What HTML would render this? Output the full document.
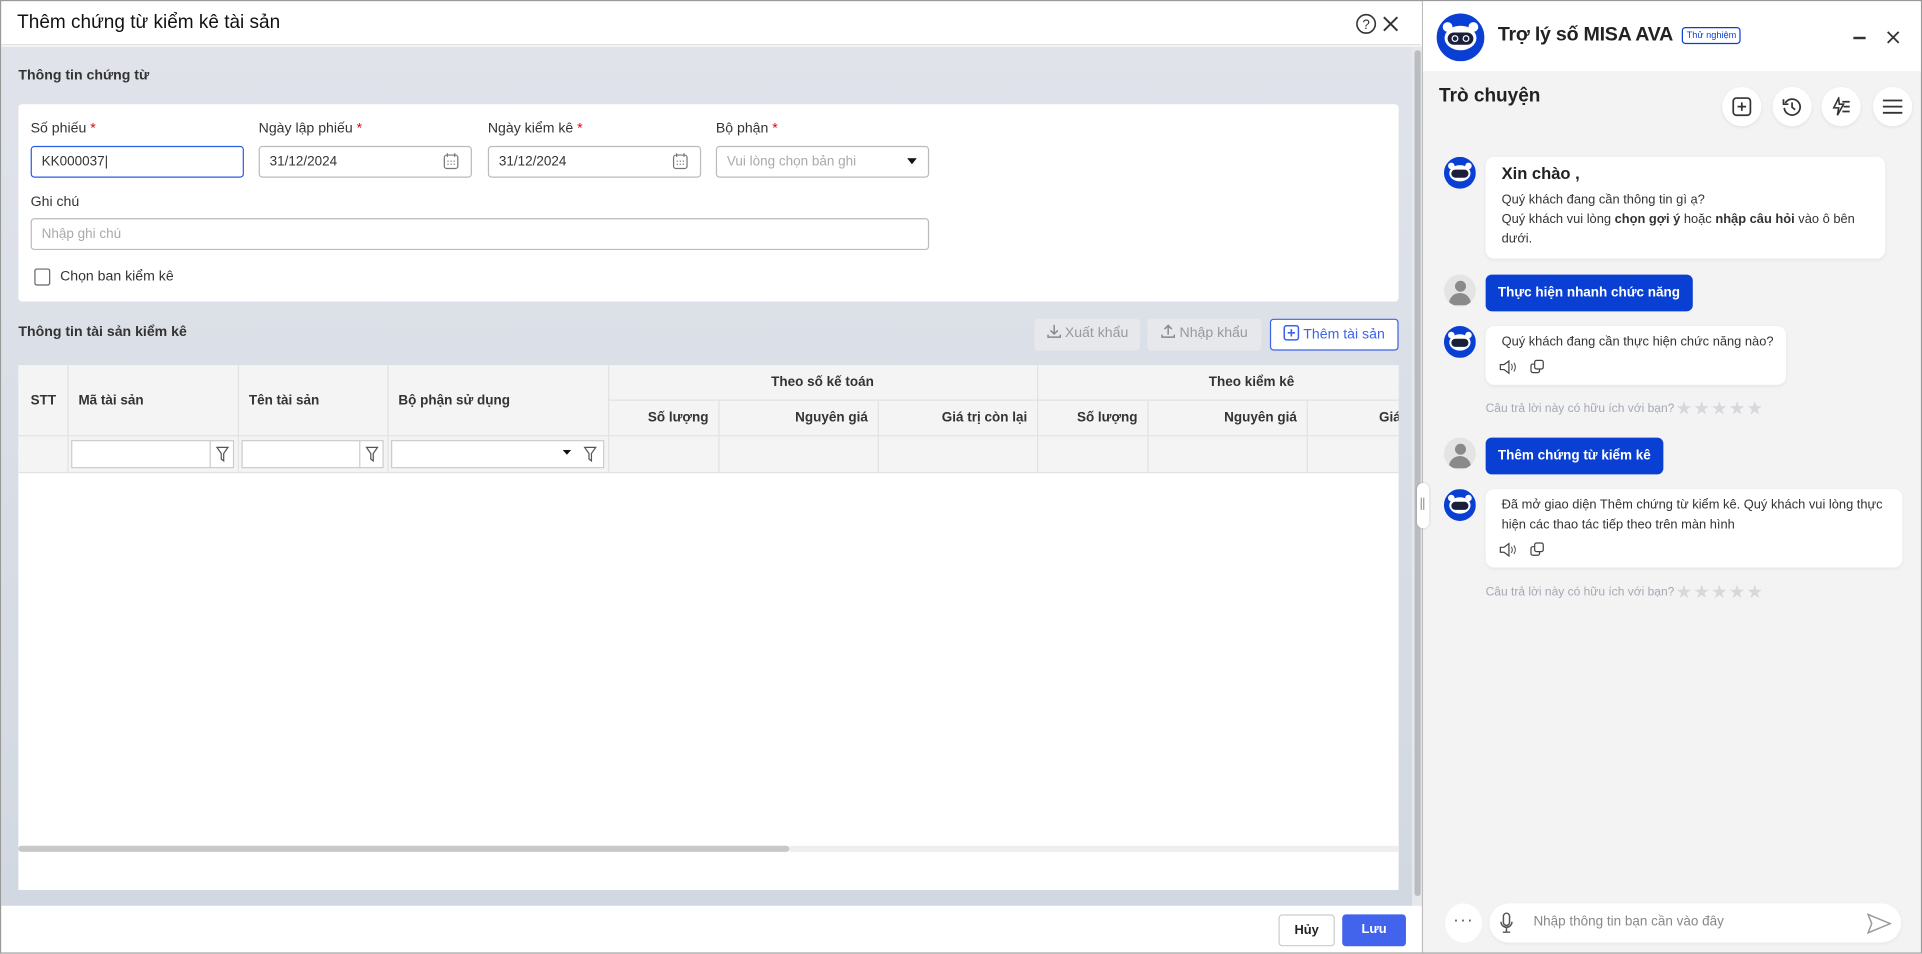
<!DOCTYPE html>
<html><head><meta charset="utf-8"><style>
*{box-sizing:border-box;margin:0;padding:0}
html,body{width:1922px;height:954px;overflow:hidden;background:#fff}
#s{width:1568px;height:778px;transform:scale(1.22577);transform-origin:0 0;position:relative;font-family:"Liberation Sans",Arial,sans-serif;font-size:12px;color:#222;border:1px solid #999;overflow:hidden}
.a{position:absolute}
.lbl{font-size:11.5px;color:#333}
.req{color:#e00}
.inp{position:absolute;height:26px;border:1px solid #bbb;border-radius:3px;background:#fff;font-size:11px;padding:0 8px;line-height:24px;color:#333}
.ph{color:#aaa}
.th{position:absolute;font-weight:bold;font-size:11px;color:#333;white-space:nowrap}
.vl{position:absolute;width:1px;background:#e2e2e2}
.btn{position:absolute;height:26px;border-radius:3px;font-size:11.5px;line-height:24px;text-align:center;white-space:nowrap}
.bub{position:absolute;background:#fff;border-radius:7px;box-shadow:0 1px 3px rgba(0,0,0,.06);font-size:10.5px;color:#333;line-height:16px}
.ub{position:absolute;background:#0a3fd4;color:#fff;border-radius:5px;font-weight:bold;height:30px;line-height:30px;padding:0 10px;white-space:nowrap;font-size:11px}
.uav{position:absolute;width:26px;height:26px;border-radius:50%;background:#e4e4e4;overflow:hidden}
.rate{position:absolute;font-size:9.8px;color:#a3a9b5;white-space:nowrap}
.stars{position:absolute;color:#d6d8dc;font-size:15px;letter-spacing:1px}
.ib{position:absolute;width:32px;height:32px;border-radius:50%;background:#fff;box-shadow:0 1px 3px rgba(0,0,0,.08)}
</style></head><body><div id="s">
<div class="a" style="left:0;top:0;width:1158px;height:36px;background:#fff;border-bottom:1px solid #ddd"></div>
<div class="a" style="left:13px;top:9px;font-size:15.5px;color:#111">Thêm chứng từ kiểm kê tài sản</div>
<svg class="a" style="left:1105px;top:10px" width="17" height="17" viewBox="0 0 17 17"><circle cx="8.5" cy="8.5" r="7.5" fill="none" stroke="#333" stroke-width="1.3"/><text x="8.5" y="12.5" font-size="11" text-anchor="middle" fill="#333" font-family="Liberation Sans">?</text></svg>
<svg class="a" style="left:1127px;top:12px" width="13" height="13"><path d="M1 1L12 12M12 1L1 12" stroke="#333" stroke-width="1.6"/></svg>
<div class="a" style="left:0;top:37px;width:1151px;height:701px;background:linear-gradient(#e0e3ea,#d2d8e1)"></div>
<div class="a" style="left:1151px;top:37px;width:8px;height:701px;background:#e5e7ea"></div>
<div class="a" style="left:1153px;top:40px;width:5px;height:690px;background:#b9bcc1;border-radius:3px"></div>
<div class="a" style="left:14px;top:55px;font-weight:bold;font-size:11.5px;color:#333">Thông tin chứng từ</div>
<div class="a" style="left:14px;top:84px;width:1126px;height:161px;background:#fff;border-radius:3px"></div>
<div class="a lbl" style="left:24px;top:98px">Số phiếu <span class="req">*</span></div>
<div class="a lbl" style="left:210px;top:98px">Ngày lập phiếu <span class="req">*</span></div>
<div class="a lbl" style="left:397px;top:98px">Ngày kiểm kê <span class="req">*</span></div>
<div class="a lbl" style="left:583px;top:98px">Bộ phận <span class="req">*</span></div>
<div class="inp" style="left:24px;top:118px;width:174px;border-color:#2b5ce6">KK000037|</div>
<div class="inp" style="left:210px;top:118px;width:174px">31/12/2024</div>
<div class="inp" style="left:397px;top:118px;width:174px">31/12/2024</div>
<svg class="a" style="left:360px;top:123px" width="14" height="15"><rect x="1.5" y="2.5" width="11" height="11" rx="2" fill="none" stroke="#777"/><path d="M4 1v3M10 1v3" stroke="#777"/><g fill="#777"><rect x="4" y="7" width="1" height="1"/><rect x="6.5" y="7" width="1" height="1"/><rect x="9" y="7" width="1" height="1"/><rect x="4" y="9.5" width="1" height="1"/><rect x="6.5" y="9.5" width="1" height="1"/><rect x="9" y="9.5" width="1" height="1"/></g></svg>
<svg class="a" style="left:547px;top:123px" width="14" height="15"><rect x="1.5" y="2.5" width="11" height="11" rx="2" fill="none" stroke="#777"/><path d="M4 1v3M10 1v3" stroke="#777"/><g fill="#777"><rect x="4" y="7" width="1" height="1"/><rect x="6.5" y="7" width="1" height="1"/><rect x="9" y="7" width="1" height="1"/><rect x="4" y="9.5" width="1" height="1"/><rect x="6.5" y="9.5" width="1" height="1"/><rect x="9" y="9.5" width="1" height="1"/></g></svg>
<div class="inp ph" style="left:583px;top:118px;width:174px">Vui lòng chọn bản ghi</div>
<svg class="a" style="left:739px;top:128px" width="8" height="6"><path d="M0 0H8L4 5Z" fill="#111"/></svg>
<div class="a lbl" style="left:24px;top:158px">Ghi chú</div>
<div class="inp ph" style="left:24px;top:177px;width:733px">Nhập ghi chú</div>
<div class="a" style="left:27px;top:218px;width:13px;height:14px;border:1px solid #666;border-radius:2px"></div>
<div class="a lbl" style="left:48px;top:219px">Chọn ban kiểm kê</div>
<div class="a" style="left:14px;top:264px;font-weight:bold;font-size:11.5px;color:#333">Thông tin tài sản kiểm kê</div>
<div class="btn" style="left:843px;top:259px;width:86px;background:#e6e8ec;color:#999"><svg width="12" height="12" style="vertical-align:-1px"><path d="M6 1v7M3 5.5L6 8.5L9 5.5M1 9v2h10V9" fill="none" stroke="#888" stroke-width="1.2"/></svg> Xuất khẩu</div>
<div class="btn" style="left:935px;top:259px;width:93px;background:#e6e8ec;color:#999"><svg width="12" height="12" style="vertical-align:-1px"><path d="M6 9V1.5M3 4.5L6 1.5L9 4.5M1 9v2h10V9" fill="none" stroke="#888" stroke-width="1.2"/></svg> Nhập khẩu</div>
<div class="btn" style="left:1035px;top:259px;width:105px;background:#fff;border:1px solid #3e63e8;color:#3e63e8"><svg width="13" height="13" style="vertical-align:-2px"><rect x=".7" y=".7" width="11.6" height="11.6" rx="2" fill="none" stroke="#3e63e8" stroke-width="1.3"/><path d="M6.5 3.5v6M3.5 6.5h6" stroke="#3e63e8" stroke-width="1.3"/></svg> Thêm tài sản</div>
<div class="a" style="left:14px;top:297px;width:1126px;height:428px;background:#fff"></div>
<div class="a" style="left:14px;top:297px;width:1126px;height:88px;background:#f4f4f4;border-bottom:1px solid #e2e2e2"></div>
<div class="a" style="left:14px;top:354px;width:1126px;height:1px;background:#e2e2e2"></div>
<div class="a" style="left:495px;top:325px;width:645px;height:1px;background:#e2e2e2"></div>
<div class="vl" style="left:54px;top:297px;height:88px"></div>
<div class="vl" style="left:193px;top:297px;height:88px"></div>
<div class="vl" style="left:315px;top:297px;height:88px"></div>
<div class="vl" style="left:495px;top:297px;height:88px"></div>
<div class="vl" style="left:845px;top:297px;height:88px"></div>
<div class="vl" style="left:585px;top:325px;height:60px"></div>
<div class="vl" style="left:715px;top:325px;height:60px"></div>
<div class="vl" style="left:935px;top:325px;height:60px"></div>
<div class="vl" style="left:1065px;top:325px;height:60px"></div>
<div class="th" style="left:24px;top:320px">STT</div>
<div class="th" style="left:63px;top:320px">Mã tài sản</div>
<div class="th" style="left:202px;top:320px">Tên tài sản</div>
<div class="th" style="left:324px;top:320px">Bộ phận sử dụng</div>
<div class="th" style="left:495px;top:305px;width:350px;text-align:center">Theo số kế toán</div>
<div class="th" style="left:845px;top:305px;width:350px;text-align:center">Theo kiểm kê</div>
<div class="th" style="left:495px;top:334px;width:82px;text-align:right">Số lượng</div>
<div class="th" style="left:585px;top:334px;width:122px;text-align:right">Nguyên giá</div>
<div class="th" style="left:715px;top:334px;width:122px;text-align:right">Giá trị còn lại</div>
<div class="th" style="left:845px;top:334px;width:82px;text-align:right">Số lượng</div>
<div class="th" style="left:935px;top:334px;width:122px;text-align:right">Nguyên giá</div>
<div class="th" style="left:1124px;top:334px;width:16px;overflow:hidden">Giá</div>
<div class="a" style="left:57px;top:358px;width:133px;height:23px;background:#fff;border:1px solid #ccc"></div>
<div class="a" style="left:170px;top:358px;width:1px;height:23px;background:#ccc"></div>
<div class="a" style="left:196px;top:358px;width:116px;height:23px;background:#fff;border:1px solid #ccc"></div>
<div class="a" style="left:292px;top:358px;width:1px;height:23px;background:#ccc"></div>
<div class="a" style="left:318px;top:358px;width:174px;height:23px;background:#fff;border:1px solid #ccc"></div>
<svg class="a" style="left:175px;top:363px" width="11" height="13"><path d="M1 1H10L6.5 6V12L4.5 10.5V6Z" fill="none" stroke="#555"/></svg>
<svg class="a" style="left:297px;top:363px" width="11" height="13"><path d="M1 1H10L6.5 6V12L4.5 10.5V6Z" fill="none" stroke="#555"/></svg>
<svg class="a" style="left:475px;top:363px" width="11" height="13"><path d="M1 1H10L6.5 6V12L4.5 10.5V6Z" fill="none" stroke="#555"/></svg>
<svg class="a" style="left:458px;top:366px" width="7" height="5"><path d="M0 0H7L3.5 4Z" fill="#111"/></svg>
<div class="a" style="left:14px;top:689px;width:629px;height:5px;background:#c8c8c8;border-radius:3px"></div>
<div class="a" style="left:643px;top:689px;width:497px;height:5px;background:#eee"></div>
<div class="a" style="left:0;top:738px;width:1159px;height:40px;background:#fff"></div>
<div class="btn" style="left:1042px;top:745px;width:46px;border:1px solid #ccc;background:#fff;color:#222;font-weight:bold;font-size:10.5px">Hủy</div>
<div class="btn" style="left:1094px;top:745px;width:52px;background:#4263eb;color:#fff;font-weight:bold;font-size:10.5px">Lưu</div>
<!-- right panel -->
<div class="a" style="left:1159px;top:0;width:1px;height:778px;background:#bbb"></div>
<div class="a" style="left:1160px;top:0;width:408px;height:778px;background:#f3f3f3"></div>
<div class="a" style="left:1160px;top:0;width:408px;height:57px;background:#fff"></div>
<div class="a" style="left:1155px;top:393px;width:10px;height:37px;background:#fff;border-radius:5px;box-shadow:0 0 2px rgba(0,0,0,.2)"></div>
<div class="a" style="left:1158px;top:405px;width:1px;height:10px;background:#999"></div><div class="a" style="left:1160px;top:405px;width:1px;height:10px;background:#999"></div>
<svg class="a" style="left:1171px;top:10px" width="39" height="39" viewBox="0 0 39 39"><circle cx="19.5" cy="19.5" r="19.5" fill="#0a3fd4"/><ellipse cx="19.5" cy="20" rx="13" ry="10" fill="#fff"/><circle cx="9" cy="11" r="4" fill="#fff"/><circle cx="30" cy="11" r="4" fill="#fff"/><rect x="9" y="15.5" width="21" height="10" rx="5" fill="#1a1f3a"/><circle cx="15" cy="20.5" r="2.3" fill="none" stroke="#fff" stroke-width="1"/><circle cx="24" cy="20.5" r="2.3" fill="none" stroke="#fff" stroke-width="1"/></svg>
<div class="a" style="left:1221px;top:19px;font-size:16px;font-weight:bold;color:#222;white-space:nowrap;letter-spacing:-0.2px">Trợ lý số MISA AVA</div>
<div class="a" style="left:1371px;top:21px;height:14px;padding:0 3px;border:1px solid #0a3fd4;border-radius:3px;font-size:7.5px;line-height:12px;color:#0a3fd4;white-space:nowrap">Thử nghiệm</div>
<div class="a" style="left:1511px;top:29px;width:10px;height:1.5px;background:#333"></div>
<svg class="a" style="left:1538px;top:24px" width="11" height="11"><path d="M1 1L10 10M10 1L1 10" stroke="#333" stroke-width="1.5"/></svg>
<div class="a" style="left:1173px;top:69px;font-size:15.5px;font-weight:bold;color:#222">Trò chuyện</div>
<div class="ib" style="left:1404px;top:70px"></div><div class="ib" style="left:1445px;top:70px"></div><div class="ib" style="left:1485px;top:70px"></div><div class="ib" style="left:1527px;top:70px"></div>
<svg class="a" style="left:1412px;top:78px" width="16" height="16"><rect x="1" y="1" width="14" height="14" rx="2.5" fill="none" stroke="#333" stroke-width="1.4"/><path d="M8 4.5v7M4.5 8h7" stroke="#333" stroke-width="1.4"/></svg>
<svg class="a" style="left:1453px;top:78px" width="16" height="16"><path d="M2.5 5A6.5 6.5 0 1 1 1.6 9" fill="none" stroke="#333" stroke-width="1.4"/><path d="M1 2v4h4" fill="none" stroke="#333" stroke-width="1.4"/><path d="M8 4.5V8.5L10.5 10.5" fill="none" stroke="#333" stroke-width="1.4"/></svg>
<svg class="a" style="left:1493px;top:78px" width="16" height="16"><path d="M6 1L2 9H6L5 15L10 6H6.5Z" fill="none" stroke="#333" stroke-width="1.3"/><path d="M9 4h6M10 8h5M9 12h6" stroke="#333" stroke-width="1.4"/></svg>
<svg class="a" style="left:1535px;top:79px" width="16" height="14"><path d="M0 2h16M0 7h16M0 12h16" stroke="#333" stroke-width="1.5"/></svg>
<!-- msgs -->
<svg class="a" style="left:1177px;top:127px" width="26" height="26" viewBox="0 0 39 39"><circle cx="19.5" cy="19.5" r="19.5" fill="#0a3fd4"/><ellipse cx="19.5" cy="20" rx="13" ry="10" fill="#fff"/><circle cx="9" cy="11" r="4" fill="#fff"/><circle cx="30" cy="11" r="4" fill="#fff"/><rect x="9" y="15.5" width="21" height="10" rx="5" fill="#1a1f3a"/></svg>
<div class="bub" style="left:1211px;top:127px;width:326px;height:83px;padding:6px 13px">
<div style="font-size:13.5px;font-weight:bold;color:#222;line-height:16px;margin-bottom:5px">Xin chào ,</div>
<div>Quý khách đang cần thông tin gì ạ?</div>
<div>Quý khách vui lòng <b>chọn gợi ý</b> hoặc <b>nhập câu hỏi</b> vào ô bên dưới.</div></div>
<div class="uav" style="left:1177px;top:223px"><div style="position:absolute;left:8.5px;top:5px;width:9px;height:9px;border-radius:50%;background:#8a8a8a"></div><div style="position:absolute;left:4px;top:15px;width:18px;height:10px;border-radius:9px 9px 0 0;background:#8a8a8a"></div></div>
<div class="ub" style="left:1211px;top:223px">Thực hiện nhanh chức năng</div>
<svg class="a" style="left:1177px;top:265px" width="26" height="26" viewBox="0 0 39 39"><circle cx="19.5" cy="19.5" r="19.5" fill="#0a3fd4"/><ellipse cx="19.5" cy="20" rx="13" ry="10" fill="#fff"/><circle cx="9" cy="11" r="4" fill="#fff"/><circle cx="30" cy="11" r="4" fill="#fff"/><rect x="9" y="15.5" width="21" height="10" rx="5" fill="#1a1f3a"/></svg>
<div class="bub" style="left:1211px;top:265px;width:245px;height:48px;padding:5px 13px;white-space:nowrap">Quý khách đang cần thực hiện chức năng nào?</div>
<svg class="a" style="left:1222px;top:292px" width="38" height="13"><path d="M1 4.5h3l4-3v10l-4-3H1Z" fill="none" stroke="#444"/><path d="M10 4q1.5 2.5 0 5M12 3q2.5 3.5 0 7" fill="none" stroke="#444" stroke-width=".8"/><rect x="26" y="4" width="7" height="7" rx="1.5" fill="#fff" stroke="#444"/><rect x="29" y="1" width="7" height="7" rx="1.5" fill="#fff" stroke="#444"/></svg>
<div class="rate" style="left:1211px;top:327px">Câu trả lời này có hữu ích với bạn?</div>
<div class="stars" style="left:1366px;top:323px">★★★★★</div>
<div class="uav" style="left:1177px;top:356px"><div style="position:absolute;left:8.5px;top:5px;width:9px;height:9px;border-radius:50%;background:#8a8a8a"></div><div style="position:absolute;left:4px;top:15px;width:18px;height:10px;border-radius:9px 9px 0 0;background:#8a8a8a"></div></div>
<div class="ub" style="left:1211px;top:356px">Thêm chứng từ kiểm kê</div>
<svg class="a" style="left:1177px;top:398px" width="26" height="26" viewBox="0 0 39 39"><circle cx="19.5" cy="19.5" r="19.5" fill="#0a3fd4"/><ellipse cx="19.5" cy="20" rx="13" ry="10" fill="#fff"/><circle cx="9" cy="11" r="4" fill="#fff"/><circle cx="30" cy="11" r="4" fill="#fff"/><rect x="9" y="15.5" width="21" height="10" rx="5" fill="#1a1f3a"/></svg>
<div class="bub" style="left:1211px;top:398px;width:340px;height:64px;padding:5px 13px">Đã mở giao diện Thêm chứng từ kiểm kê. Quý khách vui lòng thực hiện các thao tác tiếp theo trên màn hình</div>
<svg class="a" style="left:1222px;top:441px" width="38" height="13"><path d="M1 4.5h3l4-3v10l-4-3H1Z" fill="none" stroke="#444"/><path d="M10 4q1.5 2.5 0 5M12 3q2.5 3.5 0 7" fill="none" stroke="#444" stroke-width=".8"/><rect x="26" y="4" width="7" height="7" rx="1.5" fill="#fff" stroke="#444"/><rect x="29" y="1" width="7" height="7" rx="1.5" fill="#fff" stroke="#444"/></svg>
<div class="rate" style="left:1211px;top:477px">Câu trả lời này có hữu ích với bạn?</div>
<div class="stars" style="left:1366px;top:473px">★★★★★</div>
<div class="a" style="left:1178px;top:736px;width:30px;height:32px;border-radius:50%;background:#fff;text-align:center;line-height:26px;color:#555;font-size:14px;letter-spacing:1px">···</div>
<div class="a" style="left:1214px;top:736px;width:336px;height:32px;border-radius:16px;background:#fff;box-shadow:0 1px 3px rgba(0,0,0,.06)"></div>
<svg class="a" style="left:1222px;top:743px" width="12" height="18"><rect x="3.5" y="1" width="5" height="10" rx="2.5" fill="none" stroke="#555" stroke-width="1.2"/><path d="M1.5 8a4.5 4.5 0 0 0 9 0M6 12.5V16M3 16.5h6" fill="none" stroke="#555" stroke-width="1.2"/></svg>
<div class="a" style="left:1250px;top:745px;font-size:11px;color:#888">Nhập thông tin bạn cần vào đây</div>
<svg class="a" style="left:1522px;top:744px" width="20" height="17"><path d="M1 1L19 8.5L1 16L4 8.5Z" fill="none" stroke="#999" stroke-width="1.2"/></svg>
</div></body></html>
